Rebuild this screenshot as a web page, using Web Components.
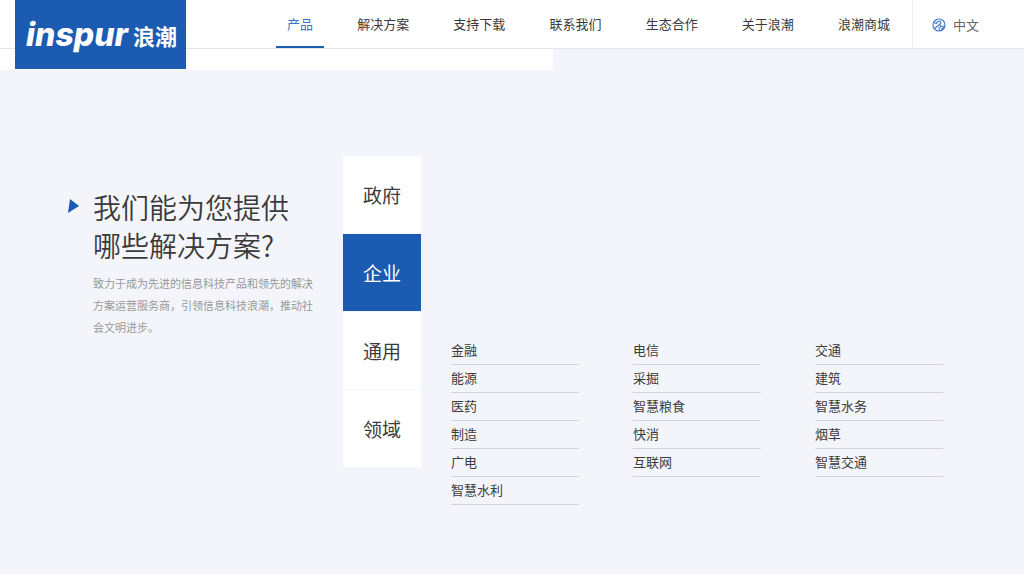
<!DOCTYPE html>
<html lang="zh-CN">
<head>
<meta charset="utf-8">
<title>浪潮</title>
<style>
:root{--blue:#1b5bb1;--ink:#3b3b3b;--bg:#f3f5fa}
body{margin:0;background:var(--bg);color:var(--ink);font-family:"Noto Sans CJK SC","Noto Sans",sans-serif}
</style>
</head>
<body>
<inspur-page></inspur-page>
<script>
const define=(name,css,html)=>customElements.define(name,class extends HTMLElement{
  connectedCallback(){
    if(this.shadowRoot)return;
    this.attachShadow({mode:'open'}).innerHTML=`<style>*{box-sizing:border-box}${css}</style>${typeof html==='function'?html(this):html}`;
  }
});

define('brand-logo',`
:host{display:block;flex:none;width:171px;height:69px;background:var(--blue)}
a{display:flex;align-items:center;height:100%;padding:0 0 0 11px;gap:5px;color:#fff;text-decoration:none;white-space:nowrap}
.en{font:italic 800 32px/40px Inter,sans-serif}
.cn{font-size:22px;font-weight:700;line-height:40px}
`,`<a href="#"><span class="en">inspur</span><span class="cn">浪潮</span></a>`);

define('nav-item',`
:host{display:block}
a{display:block;height:48px;padding:0 11px;font-size:13px;line-height:48px;color:inherit;text-decoration:none;white-space:nowrap}
:host([active]) a{color:#3a73c4;border-bottom:2px solid var(--blue)}
`,`<a href="#"><slot></slot></a>`);

define('lang-switch',`
:host{display:block;flex:none;width:112px;border-left:1px solid #eceef3}
button{display:flex;align-items:center;gap:7px;height:48px;padding:2px 0 0 19px;border:0;background:none;font:13px/20px "Noto Sans CJK SC",sans-serif;color:#666}
svg{width:14px;height:14px;fill:none;stroke:#3f76c8;stroke-width:1.1}
`,`<button type="button"><svg viewBox="0 0 14 14" aria-hidden="true"><circle cx="7" cy="7" r="6"/><path d="M2 4.500l2.500 1L5.500 3.500 8 3l1 2-1.500 1.500L5 8.500 2.500 10.500M7.500 6.500 9 8.500 7 10l.5 3M9 8.500l4-.5M9.500 12.500l.5-2 2-1"/></svg>中文</button>`);

define('site-header',`
:host{display:flex;position:relative;height:49px;padding-left:15px;background:#fff;border-bottom:1px solid #e4e5ea}
nav{display:flex;flex:1;justify-content:space-between;padding:0 11px 0 90px}
`,`<brand-logo></brand-logo>
<nav><nav-item active>产品</nav-item><nav-item>解决方案</nav-item><nav-item>支持下载</nav-item><nav-item>联系我们</nav-item><nav-item>生态合作</nav-item><nav-item>关于浪潮</nav-item><nav-item>浪潮商城</nav-item></nav>
<lang-switch></lang-switch>`);

define('intro-block',`
:host{display:grid;grid-template-columns:25px 1fr;padding-top:32px}
svg{width:12px;height:16px;margin-top:10px;fill:var(--blue)}
h1{margin:0;font-size:28px;font-weight:350;line-height:38px;white-space:nowrap}
p{margin:8px 0 0;width:220px;font-size:11px;line-height:22px;color:#999}
`,`<svg viewBox="0 0 12 16" aria-hidden="true"><path d="M2 1 11 8 0 15z"/></svg>
<div><h1>我们能为您提供<br>哪些解决方案?</h1><p>致力于成为先进的信息科技产品和领先的解决方案运营服务商，引领信息科技浪潮，推动社会文明进步。</p></div>`);

define('sector-tab',`
:host{display:block}
button{display:block;width:100%;height:77px;padding:0;border:0;background:#fff;color:inherit;font:19px/77px "Noto Sans CJK SC",sans-serif}
:host([active]) button{background:var(--blue);color:#fff}
`,`<button type="button"><slot></slot></button>`);

define('sector-tabs',`
:host{display:grid;align-content:start;gap:1px}
`,`<sector-tab>政府</sector-tab><sector-tab active>企业</sector-tab><sector-tab>通用</sector-tab><sector-tab>领域</sector-tab>`);

define('link-column',`
:host{display:block}
ul{margin:0;padding:0;list-style:none}
li{padding-bottom:4px;border-bottom:1px solid #d3d5dc;margin-bottom:3px}
a{display:block;font-size:13px;line-height:20px;color:inherit;text-decoration:none}
`,el=>`<ul>${el.getAttribute('items').split(' ').map(t=>`<li><a href="#">${t}</a></li>`).join('')}</ul>`);

define('inspur-page',`
:host{display:block}
.strip{width:54%;height:21px;background:#fff}
main{display:grid;grid-template-columns:275px 78px minmax(0,1fr);padding:86px 81px 60px 68px}
.links{display:grid;grid-template-columns:repeat(3,1fr);column-gap:54px;padding:184px 0 0 30px}
`,`<site-header></site-header><div class="strip"></div>
<main><intro-block></intro-block><sector-tabs></sector-tabs>
<div class="links"><link-column items="金融 能源 医药 制造 广电 智慧水利"></link-column><link-column items="电信 采掘 智慧粮食 快消 互联网"></link-column><link-column items="交通 建筑 智慧水务 烟草 智慧交通"></link-column></div></main>`);
</script>
</body>
</html>
